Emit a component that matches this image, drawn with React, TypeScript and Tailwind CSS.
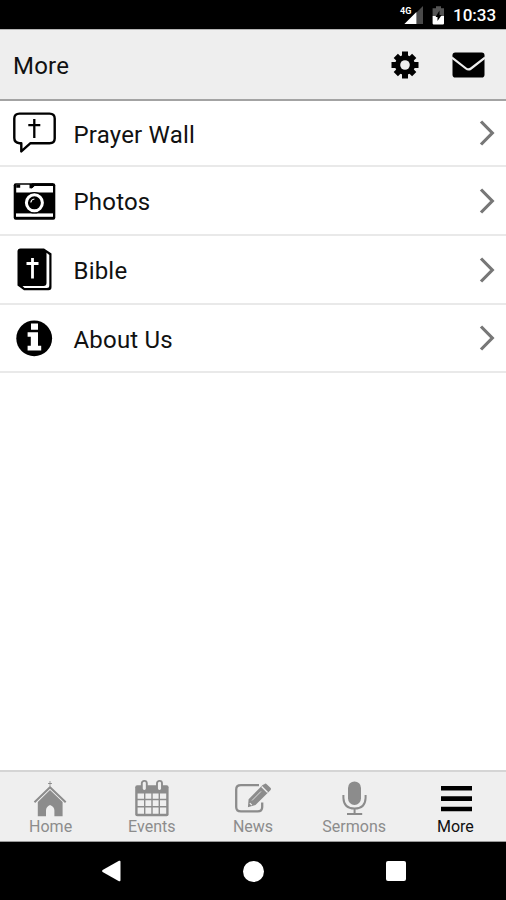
import type { ReactNode } from "react";

const menuIcons = {
  prayer: (
    <svg viewBox="0 0 48 48" className="h-12 w-12" fill="none" stroke="#000" strokeWidth="2.4" strokeLinejoin="round">
      <path d="M9.5 4.6H39.5Q44.7 4.6 44.7 9.5V29.5Q44.7 34.2 39.5 34.2H20.5L11.3 42.4V34.2H9.5Q4.3 33.6 4.3 29V9.5Q4.3 4.6 9.5 4.6Z" />
      <path d="M24.3 10V29M18.3 16.2H30.3" strokeWidth="2.3" />
    </svg>
  ),
  photos: (
    <svg viewBox="0 0 48 48" className="h-12 w-12">
      <rect x="3.7" y="6.3" width="41.6" height="36.4" rx="2" />
      <path d="M6.2 7.7H19.5V11.2H22L24.2 9H43V15.4H6.2Z" fill="#fff" />
      <path d="M6.2 7.5H10.2V10.8H6.2ZM22.3 6.3H43V9H24.5L22 11.2H20.8V7.5Z" />
      <rect x="6" y="36.4" width="37" height="3.4" fill="#fff" />
      <circle cx="24.4" cy="25.8" r="10.8" />
      <circle cx="24.4" cy="25.8" r="8" fill="none" stroke="#fff" strokeWidth="3" />
      <path d="M20.8 25.5A4 4 0 0 1 24.4 22" fill="none" stroke="#fff" strokeWidth="1.2" />
    </svg>
  ),
  bible: (
    <svg viewBox="0 0 48 48" className="h-12 w-12">
      <path d="M10.5 2.5H34L41.5 7.5V41Q41.5 44.3 38.5 44.3H14L7.5 39.5V5.5Q7.5 2.5 10.5 2.5Z" />
      <path d="M36.5 6.8L39.3 9V39.5Q39.3 42 36.8 42H14.5L12.5 40H33.5Q36.5 40 36.5 37Z" fill="#fff" />
      <path d="M22.5 12V32.5M16.5 17.5H28.5" stroke="#fff" strokeWidth="2.8" />
    </svg>
  ),
  about: (
    <svg viewBox="0 0 48 48" className="h-12 w-12">
      <circle cx="24.2" cy="24.3" r="17.9" />
      <path d="M21 9.5H28V15.8H21ZM17.6 18.3H28V31.8H31.2V36.4H17.6V31.8H20.8V22.8H17.6Z" fill="#fff" />
    </svg>
  ),
};

const menuItems: { label: string; icon: ReactNode; height: string }[] = [
  { label: "Prayer Wall", icon: menuIcons.prayer, height: "h-[66px]" },
  { label: "Photos", icon: menuIcons.photos, height: "h-[69px]" },
  { label: "Bible", icon: menuIcons.bible, height: "h-[69px]" },
  { label: "About Us", icon: menuIcons.about, height: "h-[68px]" },
];

const tabs: { label: string; icon: ReactNode; active?: boolean }[] = [
  {
    label: "Home",
    icon: (
      <svg viewBox="0 0 40 40" className="h-10 w-10" fill="#8c8c8c">
        <path d="M18.6 2H19.4V4H20.9V5H19.4V7.2L35.4 22.6L34 24L19 9.8L4.2 24L2.8 22.6L18.6 7.2V5H17.1V4H18.6Z" />
        <path d="M19 11L31.6 23V37.2H23.4V31.5Q23.4 27.5 19 26Q15 27.5 15 31.5V37.2H6.8V23Z" />
      </svg>
    ),
  },
  {
    label: "Events",
    icon: (
      <svg viewBox="0 0 40 40" className="h-10 w-10">
        <rect x="3.2" y="6.2" width="33.4" height="31" rx="2" fill="#8c8c8c" />
        <g fill="#efefef">
          <path d="M5.6 14.5H12V19.8H5.6ZM13.4 14.5H19.3V19.8H13.4ZM20.7 14.5H26.6V19.8H20.7ZM28 14.5H34.2V19.8H28Z" />
          <path d="M5.6 21.2H12V27H5.6ZM13.4 21.2H19.3V27H13.4ZM20.7 21.2H26.6V27H20.7ZM28 21.2H34.2V27H28Z" />
          <path d="M5.6 28.4H12V34.7H5.6ZM13.4 28.4H19.3V34.7H13.4ZM20.7 28.4H26.6V34.7H20.7ZM28 28.4H34.2V34.7H28Z" />
        </g>
        <g fill="#efefef" stroke="#8c8c8c" strokeWidth="1.9">
          <rect x="9.8" y="1.9" width="5" height="10" rx="2.4" />
          <rect x="25" y="1.9" width="5" height="10" rx="2.4" />
        </g>
      </svg>
    ),
  },
  {
    label: "News",
    icon: (
      <svg viewBox="0 0 40 40" className="h-10 w-10">
        <path d="M26 6.2H8Q3.2 6.2 3.2 10.5V28Q3.2 32.4 8 32.4H24.6Q29.2 32.4 29.2 28V23.5" fill="none" stroke="#8c8c8c" strokeWidth="2.3" />
        <path d="M15.6 20.2L29.6 6L31.3 5.2Q32.5 4 33.7 5.2L37.4 8.8Q38.6 10 37.4 11.2L22.5 26L14.9 28.2Z" fill="#8c8c8c" />
        <path d="M28.6 7.4L34.6 13.4" stroke="#efefef" strokeWidth="1.4" />
        <path d="M19 21.5L28 12.4" stroke="#efefef" strokeWidth=".8" />
        <path d="M16.8 24.2L18.8 26.2" stroke="#efefef" strokeWidth="1.2" />
      </svg>
    ),
  },
  {
    label: "Sermons",
    icon: (
      <svg viewBox="0 0 40 40" className="h-10 w-10">
        <rect x="14" y="2.4" width="13" height="23.6" rx="6.5" fill="#8c8c8c" />
        <path d="M9.4 16V19Q9.8 29.6 20.6 29.6Q31.2 29.6 31.6 19V16M20.6 29V34.6M13 35H28.2" fill="none" stroke="#8c8c8c" strokeWidth="2" />
      </svg>
    ),
  },
  {
    label: "More",
    active: true,
    icon: (
      <svg viewBox="0 0 40 40" className="h-10 w-10">
        <path d="M6 9.2H37M6 19.6H37M6 30H37" stroke="#000" strokeWidth="4.6" />
      </svg>
    ),
  },
];

function StatusBar() {
  return (
    <div className="flex h-[29px] shrink-0 items-center justify-end bg-black pt-0.5 pr-[9px] text-white">
      <svg viewBox="0 0 54 29" className="-mt-0.5 h-[29px] w-[54px]">
        <path d="M27 6V24H20V13Z" fill="#4a4a4a" />
        <path d="M20.4 12V24H8.4Z" fill="#fff" />
        <text x="4" y="13.8" fill="#fff" fontSize="9" fontWeight="700" fontFamily="Roboto, sans-serif">4G</text>
        <path d="M40 6.2H45V8.2H48V16H36.6V8.2H40Z" fill="#555" />
        <path d="M36.6 16H48V23.6Q48 24.4 47.2 24.4H37.4Q36.6 24.4 36.6 23.6Z" fill="#fff" />
        <path d="M43.5 10.5V15H45.7L41.5 21V17H39.5Z" fill="#000" />
      </svg>
      <span className="ml-[3px] w-11 text-[17px] leading-none font-medium">10:33</span>
    </div>
  );
}

function Header() {
  return (
    <header className="flex h-[72px] shrink-0 items-center border-t border-b-2 border-t-[#b5b5b5] border-b-[#a3a3a3] bg-[#eee] pr-[21px] pl-[13px]">
      <h1 className="flex-1 pt-0.5 text-2xl tracking-[0.2px]">More</h1>
      <svg viewBox="0 0 28 28" className="mr-[33px] h-7 w-7">
        <g stroke="#000" strokeWidth="6">
          <path d="M14 .5V27.5M.5 14H27.5M4.8 4.8L23.2 23.2M23.2 4.8L4.8 23.2" />
        </g>
        <circle cx="14" cy="14" r="10" />
        <circle cx="14" cy="14" r="4.8" fill="#eee" />
      </svg>
      <svg viewBox="0 0 33 26" className="h-[26px] w-[33px]">
        <rect x=".5" y=".5" width="32" height="25" rx="2.8" />
        <path d="M0 5.5L14 16.5Q16.5 18.4 19 16.5L33 5.5" fill="none" stroke="#eee" strokeWidth="2.2" />
      </svg>
    </header>
  );
}

export default function App() {
  return (
    <div className="flex h-[900px] w-[506px] flex-col overflow-hidden bg-white font-['Roboto',sans-serif] text-[#111]">
      <StatusBar />
      <Header />

      <main className="flex-1">
        {menuItems.map((item) => (
          <div key={item.label} className={`flex items-center border-b-2 border-[#e9e9e9] pr-[11px] pl-2.5 ${item.height}`}>
            {item.icon}
            <span className="ml-[15.5px] flex-1 pt-[3px] text-2xl tracking-[0.2px]">{item.label}</span>
            <svg viewBox="0 0 16 28" className="h-7 w-4" fill="none" stroke="#777" strokeWidth="3.2">
              <path d="M2 2.5L13.3 14L2 25.5" />
            </svg>
          </div>
        ))}
      </main>

      <nav className="grid h-[72px] shrink-0 grid-cols-5 border-t-2 border-b border-t-[#d5d5d5] border-b-[#999] bg-[#efefef]">
        {tabs.map((tab) => (
          <div key={tab.label} className={`flex flex-col items-center pt-[7px] text-base leading-4 ${tab.active ? "text-[#111]" : "text-[#8c8c8c]"}`}>
            {tab.icon}
            <span>{tab.label}</span>
          </div>
        ))}
      </nav>

      <div className="flex h-[58px] shrink-0 items-center justify-center gap-[122px] bg-black">
        <svg viewBox="0 0 20 22" className="h-[22px] w-5" fill="#fff">
          <path d="M1.6 10L18 .8Q19.5 .3 19.5 1.8V20.2Q19.5 21.7 18 21.2L1.6 12Q.4 11 1.6 10Z" />
        </svg>
        <span className="h-[21px] w-[21px] rounded-full bg-white" />
        <span className="h-5 w-5 rounded-xs bg-white" />
      </div>
    </div>
  );
}
